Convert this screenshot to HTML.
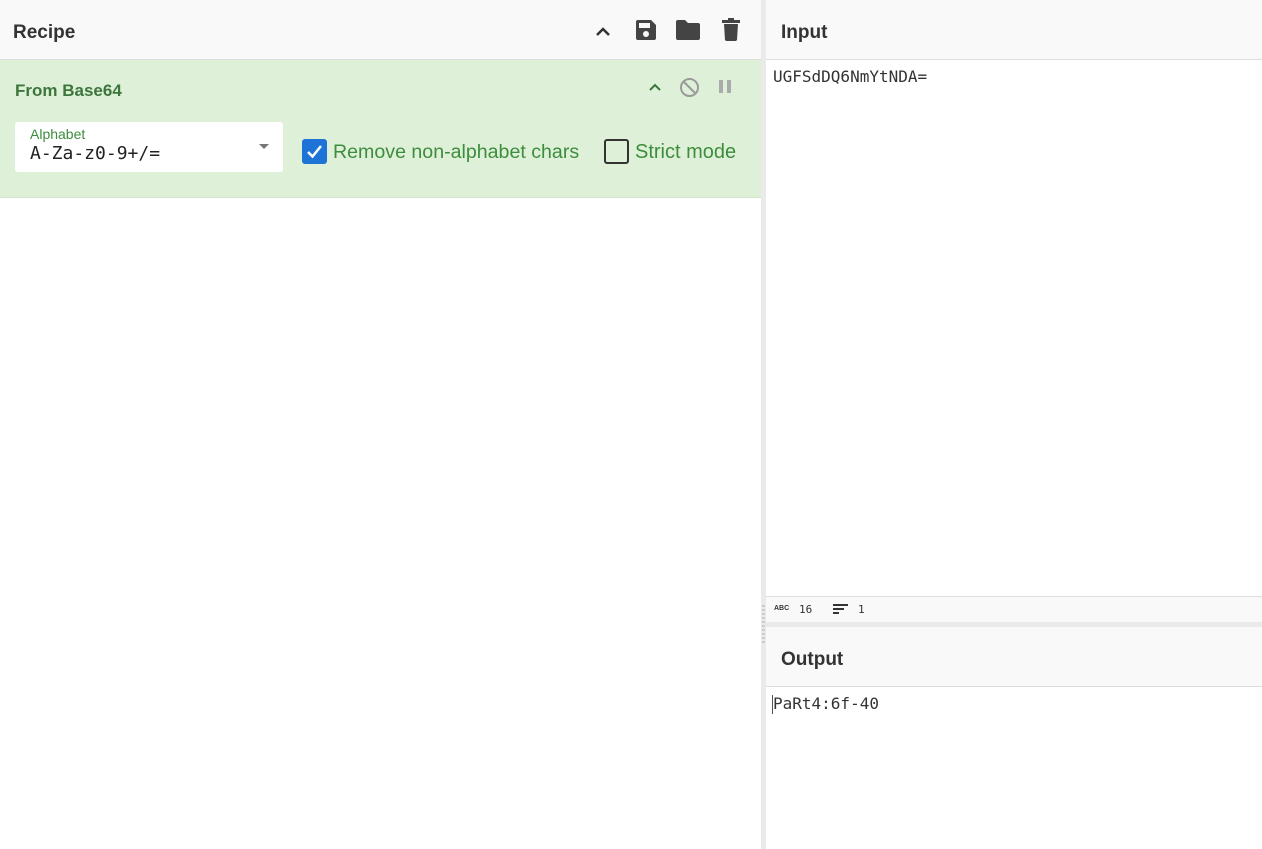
<!DOCTYPE html>
<html><head><meta charset="utf-8"><style>
*{box-sizing:border-box;margin:0;padding:0}
body{width:1262px;height:849px;overflow:hidden;background:#fff;font-family:"Liberation Sans",sans-serif;position:relative}
.hdr{position:absolute;height:60px;background:#f9f9f9;border-bottom:1px solid #ddd;font-weight:bold;font-size:19px;color:#333;padding:22px 0 0 13px}
.mono{font-family:"DejaVu Sans Mono","Liberation Mono",monospace}
</style></head><body>
<div class="hdr" style="left:0;top:0;width:761px">Recipe</div>
<svg style="position:absolute;left:594px;top:21px" width="18" height="20" viewBox="0 0 18 20"><path d="M3 14 L9 8 L15 14" stroke="#333" stroke-width="2.5" fill="none"/></svg>
<svg style="position:absolute;left:634px;top:18px" width="24" height="24" viewBox="0 0 24 24"><path d="M2 4a2 2 0 0 1 2-2h13l5 5v13a2 2 0 0 1-2 2H4a2 2 0 0 1-2-2z" fill="#444"/><rect x="5" y="5" width="11" height="5" fill="#f9f9f9"/><circle cx="12" cy="16" r="3" fill="#f9f9f9"/></svg>
<svg style="position:absolute;left:675px;top:19px" width="26" height="22" viewBox="0 0 26 22"><path d="M1 3a2 2 0 0 1 2-2h7l3 3h10a2 2 0 0 1 2 2v13a2 2 0 0 1-2 2H3a2 2 0 0 1-2-2z" fill="#444"/></svg>
<svg style="position:absolute;left:721px;top:18px" width="20" height="24" viewBox="0 0 20 24"><rect x="1" y="2" width="18" height="3" fill="#444"/><rect x="7" y="0" width="6" height="3" fill="#444"/><path d="M3 6h14l-1 16a2 2 0 0 1-2 1H6a2 2 0 0 1-2-1z" fill="#444"/></svg>

<div style="position:absolute;left:0;top:60px;width:761px;height:138px;background:#dff0d8;border-bottom:1px solid #d4e5cd"></div>
<div style="position:absolute;left:15px;top:81px;font-weight:bold;font-size:17px;color:#3c763d">From Base64</div>
<svg style="position:absolute;left:647px;top:80px" width="16" height="14" viewBox="0 0 16 14"><path d="M3 10 L8 5 L13 10" stroke="#3c763d" stroke-width="2" fill="none"/></svg>
<svg style="position:absolute;left:679px;top:77px" width="21" height="21" viewBox="0 0 21 21"><circle cx="10.5" cy="10.5" r="8.5" stroke="#9a9a9a" stroke-width="2" fill="none"/><path d="M4.5 4.5 L16.5 16.5" stroke="#9a9a9a" stroke-width="2"/></svg>
<div style="position:absolute;left:719px;top:80px;width:4px;height:13px;background:#aaa"></div>
<div style="position:absolute;left:727px;top:80px;width:4px;height:13px;background:#aaa"></div>

<div style="position:absolute;left:15px;top:122px;width:268px;height:50px;background:#fff;border-radius:3px"></div>
<div style="position:absolute;left:30px;top:126px;font-size:14px;color:#3c8d3d">Alphabet</div>
<div class="mono" style="position:absolute;left:30px;top:143px;font-size:18px;color:#222">A-Za-z0-9+/=</div>
<div style="position:absolute;left:259px;top:144px;width:0;height:0;border-left:5px solid transparent;border-right:5px solid transparent;border-top:5px solid #777"></div>

<div style="position:absolute;left:302px;top:139px;width:25px;height:25px;background:#1e73d6;border-radius:3px"></div>
<svg style="position:absolute;left:302px;top:139px" width="25" height="25" viewBox="0 0 25 25"><path d="M6 13 L10.5 17.5 L19 7" stroke="#fff" stroke-width="2.5" fill="none"/></svg>
<div style="position:absolute;left:333px;top:141px;font-size:19.6px;color:#3c8d3d">Remove non-alphabet chars</div>
<div style="position:absolute;left:604px;top:139px;width:25px;height:25px;border:2px solid #333;border-radius:3px"></div>
<div style="position:absolute;left:635px;top:141px;font-size:20px;color:#3c8d3d">Strict mode</div>

<div style="position:absolute;left:761px;top:0;width:5px;height:849px;background:#eaeaea"></div>
<div style="position:absolute;left:762px;top:605px;width:3px;height:40px;background:repeating-linear-gradient(#ccc 0 2px,transparent 2px 4px)"></div>

<div class="hdr" style="left:766px;top:0;width:496px;padding-left:15px">Input</div>
<div class="mono" style="position:absolute;left:773px;top:67px;font-size:16px;color:#333">UGFSdDQ6NmYtNDA=</div>
<div style="position:absolute;left:766px;top:596px;width:496px;height:26px;background:#f9f9f9;border-top:1px solid #ddd"></div>
<div style="position:absolute;left:774px;top:605px;font-size:7px;font-weight:bold;color:#333">ABC</div>
<div class="mono" style="position:absolute;left:799px;top:603px;font-size:11px;color:#333">16</div>
<div style="position:absolute;left:833px;top:604px;width:15px;height:2px;background:#333"></div>
<div style="position:absolute;left:833px;top:608px;width:11px;height:2px;background:#333"></div>
<div style="position:absolute;left:833px;top:612px;width:6px;height:2px;background:#333"></div>
<div class="mono" style="position:absolute;left:858px;top:603px;font-size:11px;color:#333">1</div>
<div style="position:absolute;left:766px;top:622px;width:496px;height:5px;background:#eaeaea"></div>
<div class="hdr" style="left:766px;top:627px;width:496px;padding-left:15px">Output</div>
<div style="position:absolute;left:772px;top:695px;width:1px;height:19px;background:#555"></div>
<div class="mono" style="position:absolute;left:773px;top:694px;font-size:16px;color:#333">PaRt4:6f-40</div>
</body></html>
